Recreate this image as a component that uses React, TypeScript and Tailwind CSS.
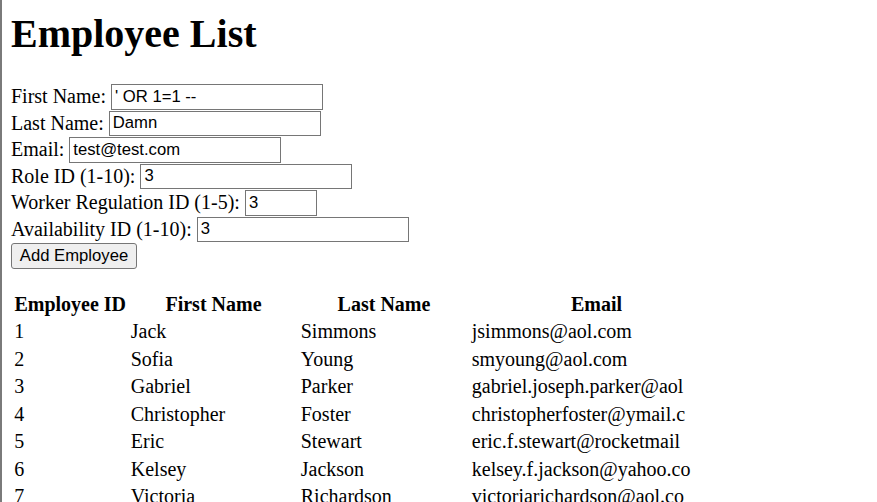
const employees = [
  { id: 1, first: 'Jack', last: 'Simmons', email: 'jsimmons@aol.com' },
  { id: 2, first: 'Sofia', last: 'Young', email: 'smyoung@aol.com' },
  { id: 3, first: 'Gabriel', last: 'Parker', email: 'gabriel.joseph.parker@aol' },
  { id: 4, first: 'Christopher', last: 'Foster', email: 'christopherfoster@ymail.c' },
  { id: 5, first: 'Eric', last: 'Stewart', email: 'eric.f.stewart@rocketmail' },
  { id: 6, first: 'Kelsey', last: 'Jackson', email: 'kelsey.f.jackson@yahoo.co' },
  { id: 7, first: 'Victoria', last: 'Richardson', email: 'victoriarichardson@aol.co' },
];

const fields = [
  { label: 'First Name:', value: "' OR 1=1 --", width: 'w-[212px]' },
  { label: 'Last Name:', value: 'Damn', width: 'w-[212px]' },
  { label: 'Email:', value: 'test@test.com', width: 'w-[212px]' },
  { label: 'Role ID (1-10):', value: '3', width: 'w-[212px]' },
  { label: 'Worker Regulation ID (1-5):', value: '3', width: 'w-[72px]' },
  { label: 'Availability ID (1-10):', value: '3', width: 'w-[212px]' },
];

export default function App() {
  return (
    <div className="h-[502px] overflow-hidden border-l-2 border-[#7a7a7a] bg-white pl-[9px] pt-[10.5px] text-black font-['Liberation_Serif','Times_New_Roman',serif]">
      <h1 className="text-[40px] font-bold leading-[46px]">Employee List</h1>

      {/* Add form */}
      <form className="mt-[27px]" onSubmit={(e) => e.preventDefault()}>
        {fields.map((f) => (
          <div key={f.label} className="flex h-[26.5px] items-center text-[20px] leading-[23px]">
            <label>{f.label}</label>
            <input
              defaultValue={f.value}
              className={`ml-[5px] h-[25.5px] ${f.width} border border-[#767676] bg-white px-[3px] text-[16.67px] leading-[19px] text-black font-['Liberation_Sans',Arial,sans-serif]`}
            />
          </div>
        ))}
        <div className="flex h-[26.5px] items-center">
          <button
            type="submit"
            className="h-[25.5px] w-[126px] rounded-[3px] border border-[#767676] bg-[#efefef] text-[16.67px] leading-[19px] text-black font-['Liberation_Sans',Arial,sans-serif]"
          >
            Add Employee
          </button>
        </div>
      </form>

      {/* Employee table */}
      <table className="mt-[21px] table-fixed border-separate border-spacing-[2px] text-[20px] leading-[23px]">
        <colgroup>
          <col className="w-[114.5px]" />
          <col className="w-[168px]" />
          <col className="w-[169px]" />
          <col className="w-[252px]" />
        </colgroup>
        <thead>
          <tr>
            <th className="h-[25px] px-[1.25px] text-center font-bold">Employee ID</th>
            <th className="h-[25px] px-[1.25px] text-center font-bold">First Name</th>
            <th className="h-[25px] px-[1.25px] text-center font-bold">Last Name</th>
            <th className="h-[25px] px-[1.25px] text-center font-bold">Email</th>
          </tr>
        </thead>
        <tbody>
          {employees.map((e) => (
            <tr key={e.id}>
              <td className="h-[25.5px] whitespace-nowrap px-[1.25px]">{e.id}</td>
              <td className="h-[25.5px] whitespace-nowrap px-[1.25px]">{e.first}</td>
              <td className="h-[25.5px] whitespace-nowrap px-[1.25px]">{e.last}</td>
              <td className="h-[25.5px] whitespace-nowrap px-[1.25px]">{e.email}</td>
            </tr>
          ))}
        </tbody>
      </table>
    </div>
  );
}
